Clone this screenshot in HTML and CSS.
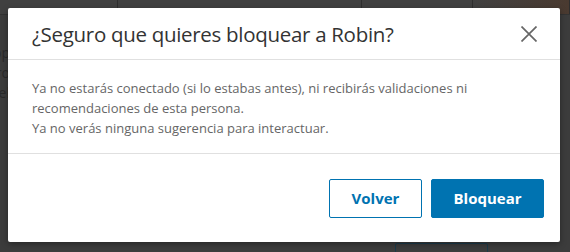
FILE: index.html
```html
<!DOCTYPE html>
<html lang="es">
<head>
<meta charset="UTF-8" />
<meta name="viewport" content="width=device-width, initial-scale=1.0"/>
<title>Bloquear</title>
<link rel="stylesheet" href="styles.css">
</head>
<body>
<div class="page">
  <div class="page-top">
    <div class="col col-a"></div>
    <div class="col col-b"></div>
    <div class="col col-c"></div>
    <div class="col col-d"></div>
  </div>
  <div class="page-side">
    <span>op</span>
    <span>ro</span>
    <span>el</span>
  </div>
  <div class="page-btn"></div>
</div>

<div class="modal" role="dialog">
  <div class="modal-header">
    <h2>¿Seguro que quieres bloquear a Robin?</h2>
    <button class="close" aria-label="Cerrar">
      <svg width="16" height="16" viewBox="0 0 16 16">
        <path d="M0.5 0.5 L15.5 15.5 M15.5 0.5 L0.5 15.5" stroke="#666" stroke-width="1.7" fill="none"/>
      </svg>
    </button>
  </div>
  <div class="modal-body">
    <p>Ya no estarás conectado (si lo estabas antes), ni recibirás validaciones ni recomendaciones de esta persona.</p>
    <p>Ya no verás ninguna sugerencia para interactuar.</p>
  </div>
  <div class="modal-footer">
    <button class="btn btn-secondary">Volver</button>
    <button class="btn btn-primary">Bloquear</button>
  </div>
</div>
</body>
</html>
```

FILE: styles.css
```css
html {
  overflow: hidden;
}
body {
  margin: 0;
  background: #3c3c3c;
  font-family: 'Open Sans', 'Noto Sans', sans-serif;
  width: 570px;
  height: 252px;
  overflow: hidden;
  position: relative;
}
.page {
  height: 252px;
  overflow: hidden;
  position: relative;
}
.page-top {
  display: flex;
  height: 14px;
  border-bottom: 1px solid #333;
  background: #404040;
}
.col {
  border-right: 1px solid #2e2e2e;
}
.col-a { width: 117px; }
.col-b { width: 243px; }
.col-c { width: 110px; }
.col-d { flex: 1; background: linear-gradient(to right, #404040, #4a3a30); }
.page-side {
  display: flex;
  flex-direction: column;
  align-items: flex-end;
  width: 10px;
  padding-top: 28px;
  color: #2a2a2a;
  font-size: 14px;
  line-height: 20px;
}
.page-btn {
  position: absolute;
  left: 395px;
  top: 243px;
  width: 91px;
  height: 14px;
  border: 1px solid #1c3a4a;
  border-radius: 2px;
}

.modal {
  position: absolute;
  left: 8px;
  top: 8px;
  width: 552px;
  height: 234px;
  background: #fff;
  border-radius: 2px;
  box-shadow: 0 2px 6px rgba(0, 0, 0, 0.35);
  display: flex;
  flex-direction: column;
}
.modal-header {
  height: 51px;
  display: flex;
  align-items: center;
  justify-content: space-between;
  padding: 0 15px 0 24px;
  border-bottom: 1px solid #e0e0e0;
}
.modal-header h2 {
  margin: 0;
  font-weight: 400;
  font-size: 20.5px;
  color: #333;
  letter-spacing: -0.3px;
}
.close {
  background: none;
  border: none;
  padding: 0;
  width: 32px;
  height: 32px;
  display: flex;
  align-items: center;
  justify-content: center;
  cursor: pointer;
}
.modal-body {
  padding: 18px 24px 15px;
  border-bottom: 1px solid #e0e0e0;
  color: #666;
  font-size: 13px;
  line-height: 20px;
}
.modal-body p {
  margin: 0;
}
.modal-footer {
  flex: 1;
  display: flex;
  justify-content: flex-end;
  align-items: center;
  gap: 9px;
  padding: 0 16px;
}
.btn {
  height: 39px;
  border-radius: 2px;
  font-family: 'Open Sans', sans-serif;
  font-size: 15px;
  font-weight: 700;
  cursor: pointer;
}
.btn-secondary {
  width: 93px;
  background: #fff;
  color: #0073b1;
  border: 1px solid #0073b1;
}
.btn-primary {
  width: 113px;
  background: #0073b1;
  color: #fff;
  border: 1px solid #0073b1;
}
```
